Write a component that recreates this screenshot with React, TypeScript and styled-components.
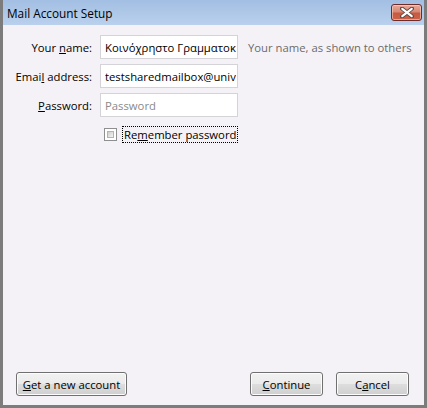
import React from "react";
import styled, { createGlobalStyle } from "styled-components";

const Global = createGlobalStyle`
  html, body { margin: 0; padding: 0; background: #ffffff; }
  body { font-family: "Segoe UI", "Open Sans", "Noto Sans", sans-serif; }
  * { box-sizing: border-box; }
`;

const Window = styled.div`
  width: 427px;
  height: 408px;
  display: flex;
  flex-direction: column;
  border: 3px solid #7c7c7c;
  border-top: none;
  background: #f5f2f7;
  font-family: "Segoe UI", "Open Sans", "Noto Sans", sans-serif;
  font-size: 11.3px;
  color: #000;
`;

const TitleBar = styled.div`
  height: 25px;
  flex: none;
  display: flex;
  align-items: flex-start;
  justify-content: space-between;
  background: linear-gradient(#a2bee2, #bad1ed);
  padding: 0 2px 0 4px;
`;

const Title = styled.div`
  font-size: 11.8px;
  line-height: 16px;
  padding-top: 5px;
  color: #000;
`;

const CloseButton = styled.div`
  margin-top: 4px;
  width: 31px;
  height: 17px;
  border: 1px solid #6e2b28;
  border-radius: 3px;
  background: linear-gradient(#e8a99b 0%, #d98873 45%, #c65a41 55%, #c9634a 100%);
  box-shadow: inset 0 0 0 1px rgba(255, 220, 210, 0.55);
  display: flex;
  align-items: center;
  justify-content: center;
`;

const Body = styled.div`
  flex: 1;
  display: flex;
  flex-direction: column;
  justify-content: space-between;
`;

const Form = styled.div`
  display: grid;
  grid-template-columns: 89px 138px auto;
  grid-auto-rows: 24px;
  column-gap: 8px;
  row-gap: 5px;
  padding-top: 10px;
  align-items: center;
`;

const Label = styled.label`
  text-align: right;
  white-space: nowrap;
`;

const Key = styled.span`
  text-decoration: underline;
`;

const TextInput = styled.input`
  width: 138px;
  height: 24px;
  border: 1px solid #d4d4d8;
  background: #ffffff;
  padding: 0 1px 0 4px;
  font-family: inherit;
  font-size: 11.3px;
  color: #000;
  outline: none;
  &::placeholder {
    color: #8a8a8a;
  }
`;

const Hint = styled.div`
  color: #6b6b6b;
  white-space: nowrap;
  padding-left: 2px;
`;

const CheckRow = styled.div`
  grid-column: 2 / span 2;
  display: flex;
  align-items: center;
  height: 20px;
  padding-left: 4px;
  gap: 5px;
`;

const CheckBox = styled.span`
  width: 13px;
  height: 13px;
  border: 1px solid #8e8f8f;
  background: #ffffff;
  padding: 2px;
  display: flex;
  &::after {
    content: "";
    flex: 1;
    border: 1px solid #b3b3b3;
    background: linear-gradient(135deg, #cdcdcd, #f4f4f4);
  }
`;

const CheckLabel = styled.span`
  border: 1px dotted #000;
  padding: 0 1px;
  line-height: 15px;
`;

const Footer = styled.div`
  display: flex;
  align-items: center;
  padding: 0 15px 9px 13px;
`;

const Button = styled.button<{ $w: number }>`
  width: ${(p) => p.$w}px;
  height: 24px;
  border: 1px solid #707070;
  border-radius: 3px;
  background: linear-gradient(#f2f2f2 0%, #ebebeb 48%, #dddddd 52%, #cfcfcf 100%);
  box-shadow: inset 0 0 0 1px #fcfcfc;
  font-family: inherit;
  font-size: 11.3px;
  color: #000;
  padding: 0;
`;

const Spacer = styled.div`
  flex: 1;
`;

const ButtonGroup = styled.div`
  display: flex;
  gap: 13px;
`;

export default function App() {
  return (
    <>
      <Global />
      <Window>
        <TitleBar>
          <Title>Mail Account Setup</Title>
          <CloseButton>
            <svg width="14" height="11" viewBox="0 0 14 11">
              <path
                d="M2 1.5 L12 9.5 M12 1.5 L2 9.5"
                stroke="#5a4a48"
                strokeWidth="4"
                strokeLinecap="round"
              />
              <path
                d="M2.3 1.8 L11.7 9.2 M11.7 1.8 L2.3 9.2"
                stroke="#ffffff"
                strokeWidth="2.2"
                strokeLinecap="round"
              />
            </svg>
          </CloseButton>
        </TitleBar>
        <Body>
          <Form>
            <Label>
              Your <Key>n</Key>ame:
            </Label>
            <TextInput readOnly defaultValue="Κοινόχρηστο Γραμματοκιβώτιο" />
            <Hint>Your name, as shown to others</Hint>

            <Label>
              Emai<Key>l</Key> address:
            </Label>
            <TextInput readOnly defaultValue="testsharedmailbox@university.gr" />
            <span />

            <Label>
              <Key>P</Key>assword:
            </Label>
            <TextInput readOnly type="password" placeholder="Password" />
            <span />

            <span />
            <CheckRow>
              <CheckBox />
              <CheckLabel>
                Re<Key>m</Key>ember password
              </CheckLabel>
            </CheckRow>
          </Form>
          <Footer>
            <Button $w={111}>
              <Key>G</Key>et a new account
            </Button>
            <Spacer />
            <ButtonGroup>
              <Button $w={73}>
                <Key>C</Key>ontinue
              </Button>
              <Button $w={73}>
                C<Key>a</Key>ncel
              </Button>
            </ButtonGroup>
          </Footer>
        </Body>
      </Window>
    </>
  );
}
